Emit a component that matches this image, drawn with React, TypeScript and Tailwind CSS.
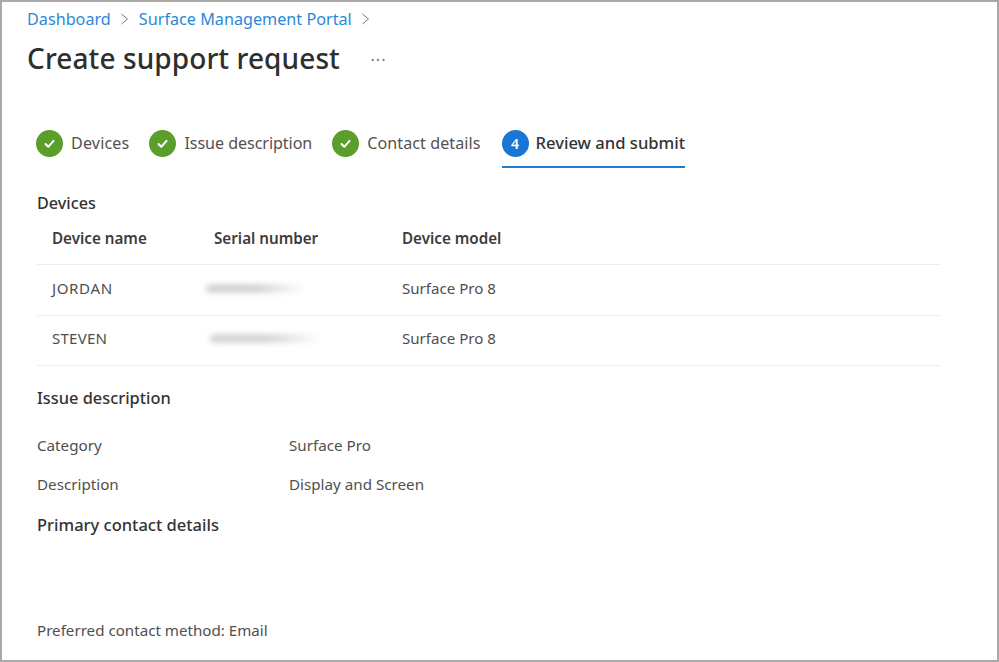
const font = { fontFamily: '"Noto Sans", "Open Sans", sans-serif' };

function Check() {
  return (
    <span className="flex h-[27px] w-[27px] shrink-0 items-center justify-center rounded-full bg-[#5c9e2c]">
      <svg width="13" height="13" viewBox="0 0 13 13" fill="none">
        <path d="M2.5 7l2.8 2.8L10.5 3.8" stroke="#fff" strokeWidth="2" strokeLinecap="round" strokeLinejoin="round" />
      </svg>
    </span>
  );
}

function Step({ label, gap, track }: { label: string; gap: string; track: string }) {
  return (
    <div className={`flex h-[62px] items-center gap-[8px] border-b-2 border-transparent pt-[15px] ${gap}`}>
      <Check />
      <span className={`text-[16.1px] text-[#55514f] ${track}`}>{label}</span>
    </div>
  );
}

function Chevron() {
  return (
    <svg width="9" height="12" viewBox="0 0 9 12" fill="none" className="shrink-0">
      <path d="M1.5 1l6 5-6 5" stroke="#777" strokeWidth="1" />
    </svg>
  );
}

function Row({ name, blur, pad, track }: { name: string; blur: string; pad: string; track: string }) {
  return (
    <div className={`grid h-[50.5px] grid-cols-[162px_188px_1fr] items-center border-b border-[#eeeeee] px-[15px] text-[15.1px] text-[#4f4f4f] ${pad}`}>
      <span className={track}>{name}</span>
      <span className={`block h-[7px] rounded-full bg-gradient-to-r from-[#c8c8c8] via-[#c8c8c8] to-transparent blur-[3px] ${blur}`} />
      <span>Surface Pro 8</span>
    </div>
  );
}

export default function App() {
  return (
    <div style={font} className="h-[662px] w-[999px] overflow-hidden border-2 border-[#a9a9a9] bg-white">
      <div className="flex h-[34px] items-center gap-[9.5px] pl-[25px] text-[16.2px] text-[#2b88d8]">
        <span>Dashboard</span>
        <Chevron />
        <span>Surface Management Portal</span>
        <Chevron />
      </div>
      <div className="flex h-[44px] items-center pl-[25px]">
        <h1 className="text-[28px] font-medium tracking-[0.1px] text-[#2e2e2e]">Create support request</h1>
        <span className="ml-[30px] text-[22px] font-light leading-none text-[#777]">···</span>
      </div>
      <div className="ml-[34px] mt-[26px] flex h-[62px] items-start">
        <Step label="Devices" gap="mr-[20px]" track="tracking-[0.15px]" />
        <Step label="Issue description" gap="mr-[20px]" track="tracking-[-0.06px]" />
        <Step label="Contact details" gap="mr-[21px]" track="tracking-[0.07px]" />
        <div className="flex h-[62px] items-center gap-[7px] border-b-2 border-[#1f7ad2] pt-[15px]">
          <span className="flex h-[27px] w-[27px] items-center justify-center rounded-full bg-[#1a76d2] text-[14px] font-semibold text-white">4</span>
          <span className="text-[16.6px] font-medium text-[#333]">Review and submit</span>
        </div>
      </div>
      <div className="ml-[35px] mr-[57px]">
        <h2 className="mt-[23px] text-[16.2px] font-medium leading-[24px] text-[#333]">Devices</h2>
        <div className="grid h-[50px] grid-cols-[162px_188px_1fr] items-center border-b border-[#eeeeee] px-[15px] pb-[2px] text-[15.2px] font-semibold text-[#3c3c3c]">
          <span>Device name</span>
          <span>Serial number</span>
          <span>Device model</span>
        </div>
        <Row name="JORDAN" blur="ml-[-8px] w-[100px]" pad="pb-[2px]" track="tracking-[0.6px]" />
        <Row name="STEVEN" blur="ml-[-4px] w-[110px]" pad="pb-[3px]" track="tracking-[0.2px]" />
        <h2 className="mt-[20px] text-[16.4px] font-medium leading-[24px] text-[#333]">Issue description</h2>
        <div className="mt-[23px] flex flex-col gap-[15px] text-[15.2px] leading-[24px] text-[#4f4f4f]">
          <div className="grid grid-cols-[252px_1fr]"><span>Category</span><span>Surface Pro</span></div>
          <div className="grid grid-cols-[252px_1fr]"><span>Description</span><span>Display and Screen</span></div>
        </div>
        <h2 className="mt-[17px] text-[16.5px] font-medium leading-[24px] text-[#333]">Primary contact details</h2>
        <p className="mt-[81px] text-[15.15px] leading-[24px] text-[#4f4f4f]">Preferred contact method: Email</p>
      </div>
    </div>
  );
}
